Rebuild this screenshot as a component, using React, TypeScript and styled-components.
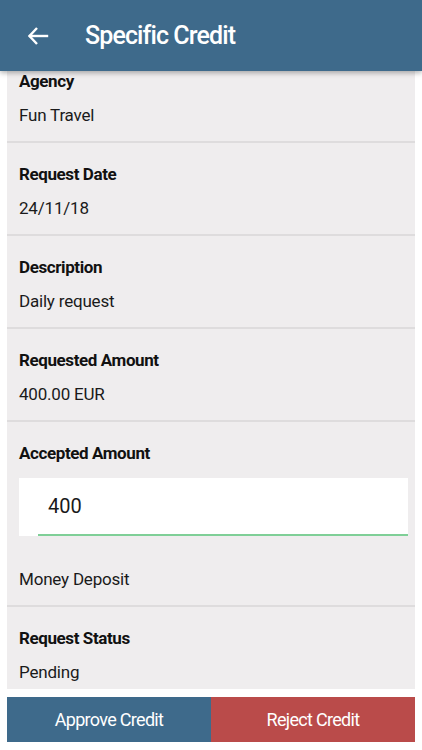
import React from 'react'
import styled, { createGlobalStyle } from 'styled-components'

const GlobalStyle = createGlobalStyle`
  html, body {
    margin: 0;
    padding: 0;
    background: #ffffff;
    font-family: Roboto, "Noto Sans", Arial, sans-serif;
  }
`

const Screen = styled.div`
  width: 422px;
  height: 750px;
  overflow: hidden;
  display: flex;
  flex-direction: column;
  background: #ffffff;
`

const Header = styled.header`
  position: relative;
  z-index: 2;
  height: 71px;
  flex-shrink: 0;
  display: flex;
  align-items: center;
  background: #3e6a8b;
  box-shadow: 0 2px 5px rgba(0, 0, 0, 0.3);
  color: #ffffff;
`

const BackButton = styled.button`
  width: 76px;
  height: 71px;
  padding: 0 0 0 26px;
  border: 0;
  background: transparent;
  display: flex;
  align-items: center;
  cursor: pointer;
`

const Title = styled.h1`
  margin: 0 0 0 9px;
  font-size: 25px;
  font-weight: 500;
  letter-spacing: -0.9px;
`

// the list is scrolled a little, so its top slides under the header
const Card = styled.main`
  margin: -21px 7px 0;
  background: #efedee;
`

interface SectionProps { last?: boolean }

const Section = styled.section<SectionProps>`
  padding: ${p => (p.last ? '21px 12px 7px' : '21px 12px 16px')};
  border-bottom: ${p => (p.last ? 'none' : '2px solid #dedcdd')};
  display: flex;
  flex-direction: column;
`

const Label = styled.div`
  font-size: 17px;
  line-height: 20px;
  font-weight: 700;
  letter-spacing: -0.4px;
  color: #111111;
`

const Value = styled.div`
  margin-top: 14px;
  font-size: 17px;
  line-height: 20px;
  letter-spacing: -0.2px;
  color: #1a1a1a;
`

const InputBox = styled.div`
  margin: 15px -5px 0 0;
  height: 58px;
  background: #ffffff;
  display: flex;
  padding-left: 19px;
`

const AmountInput = styled.input`
  flex: 1;
  border: 0;
  border-bottom: 2px solid #7fcf97;
  outline: none;
  background: transparent;
  padding: 0 0 0 10px;
  font-family: inherit;
  font-size: 20px;
  color: #1a1a1a;
`

const Note = styled(Value)`
  margin-top: 33px;
`

const Actions = styled.div`
  margin: 8px 7px 0;
  height: 45px;
  display: grid;
  grid-template-columns: 1fr 1fr;
`

interface ActionProps { tone: 'approve' | 'reject' }

const ActionButton = styled.button<ActionProps>`
  border: 0;
  background: ${p => (p.tone === 'approve' ? '#3e6a8b' : '#ba4b4a')};
  color: #ffffff;
  font-family: inherit;
  font-size: 18px;
  letter-spacing: -0.7px;
  cursor: pointer;
`

const ArrowIcon = () => (
  <svg width="24" height="24" viewBox="0 0 24 24" fill="none" stroke="#fff" strokeWidth="2.4" strokeLinecap="square">
    <line x1="21" y1="12" x2="4" y2="12" />
    <polyline points="11 4 3.5 12 11 20" strokeLinecap="butt" />
  </svg>
)

const details = [
  { label: 'Agency', value: 'Fun Travel' },
  { label: 'Request Date', value: '24/11/18' },
  { label: 'Description', value: 'Daily request' },
  { label: 'Requested Amount', value: '400.00 EUR' },
]

export default function App() {
  return (
    <Screen>
      <GlobalStyle />
      <Header>
        <BackButton aria-label="Back">
          <ArrowIcon />
        </BackButton>
        <Title>Specific Credit</Title>
      </Header>
      <Card>
        {details.map(d => (
          <Section key={d.label}>
            <Label>{d.label}</Label>
            <Value>{d.value}</Value>
          </Section>
        ))}
        <Section>
          <Label>Accepted Amount</Label>
          <InputBox>
            <AmountInput defaultValue="400" />
          </InputBox>
          <Note>Money Deposit</Note>
        </Section>
        <Section last>
          <Label>Request Status</Label>
          <Value>Pending</Value>
        </Section>
      </Card>
      <Actions>
        <ActionButton tone="approve">Approve Credit</ActionButton>
        <ActionButton tone="reject">Reject Credit</ActionButton>
      </Actions>
    </Screen>
  )
}
